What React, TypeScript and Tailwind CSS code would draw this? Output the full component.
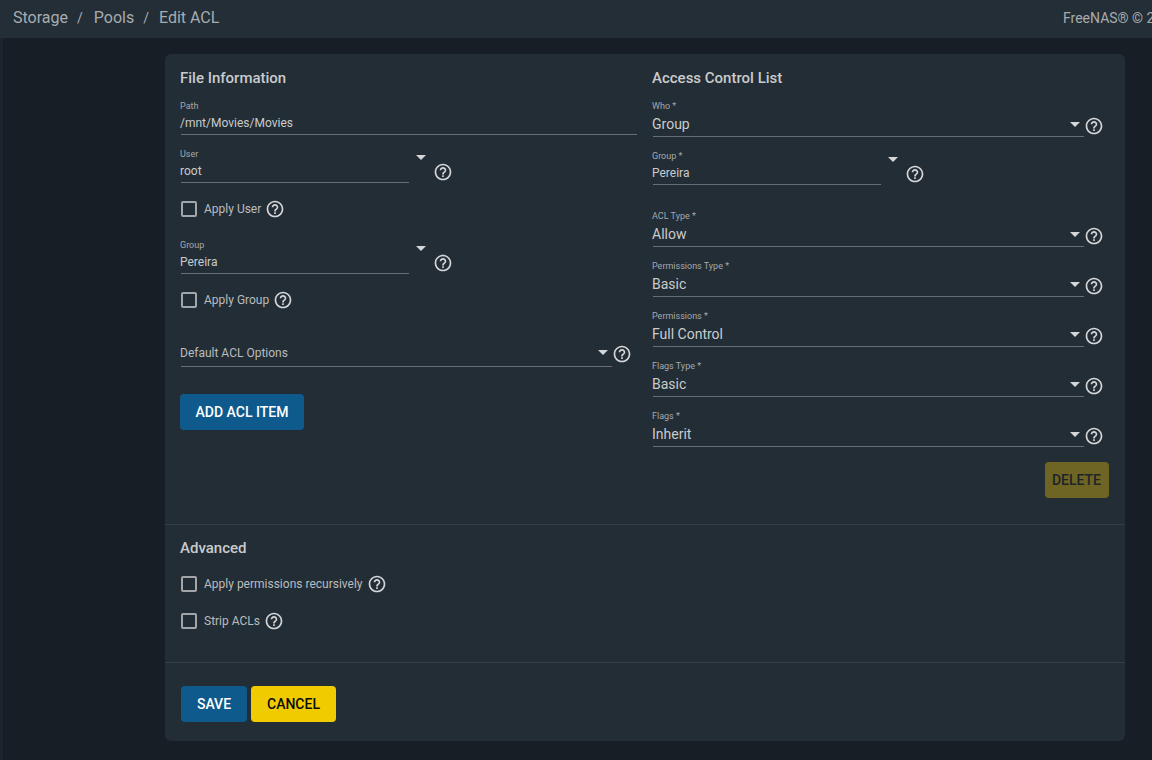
const HELP_PATH =
  "M11 18h2v-2h-2v2zm1-16C6.48 2 2 6.48 2 12s4.48 10 10 10 10-4.48 10-10S17.52 2 12 2zm0 18c-4.41 0-8-3.59-8-8s3.59-8 8-8 8 3.59 8 8-3.59 8-8 8zm0-14c-2.21 0-4 1.79-4 4h2c0-1.1.9-2 2-2s2 .9 2 2c0 2-3 1.75-3 5h2c0-2.25 3-2.5 3-5 0-2.21-1.79-4-4-4z";

function Help() {
  return (
    <svg viewBox="0 0 24 24" className="h-5 w-5 shrink-0 fill-[#d4d6d8]">
      <path d={HELP_PATH} />
    </svg>
  );
}

function Arrow() {
  return <span className="block h-0 w-0 shrink-0 border-x-[5px] border-t-[5px] border-x-transparent border-t-[#d4d6d8]" />;
}

// full width select, arrow sits on the underline row
function WideSelect({ label, value, className = "" }: { label: string; value: string; className?: string }) {
  return (
    <div className={`ml-px flex items-end ${className}`}>
      <div className="w-[431px]">
        <div className="-ml-px h-[10px] text-[9px] leading-[11px] text-[#a4a9ad]">{label}</div>
        <div className="flex h-[26px] items-center justify-between border-b border-[#686e73] pt-[2px] pr-[4px] text-[14px] text-[#c9cbcd]">
          <span className="-ml-px">{value}</span>
          <Arrow />
        </div>
      </div>
      <div className="mb-[1px] -ml-[0.5px]">
        <Help />
      </div>
    </div>
  );
}

// narrow combobox, arrow floats above the underline
function Combo({ label, value, className = "" }: { label: string; value: string; className?: string }) {
  return (
    <div className={`ml-px flex items-start ${className}`}>
      <div className="w-[228px]">
        <div className="-ml-px h-[10px] text-[9px] leading-[10px] text-[#a4a9ad]">{label}</div>
        <div className="flex h-[24px] items-center border-b border-[#686e73] text-[12px] text-[#c9cbcd]">
          <span className="-ml-px">{value}</span>
        </div>
      </div>
      <div className="ml-[7px] mt-[6px]">
        <Arrow />
      </div>
      <div className="ml-[6.5px] mt-[13px]">
        <Help />
      </div>
    </div>
  );
}

function Check({ label, className = "" }: { label: string; className?: string }) {
  return (
    <div className={`flex h-[16px] items-center ${className}`}>
      <span className="block h-4 w-4 rounded-[2px] border-2 border-[#a3a6a8]" />
      <span className="ml-[7px] text-[12px] text-[#b9bcbf]">{label}</span>
      <span className="ml-[4px]">
        <Help />
      </span>
    </div>
  );
}

function Btn({ children, className = "" }: { children: string; className?: string }) {
  return (
    <button className={`flex h-9 items-center justify-center rounded-[4px] text-[14px] font-medium ${className}`}>
      {children}
    </button>
  );
}

const aclRows = [
  ["ACL Type *", "Allow"],
  ["Permissions Type *", "Basic"],
  ["Permissions *", "Full Control"],
  ["Flags Type *", "Basic"],
  ["Flags *", "Inherit"],
];

export default function App() {
  return (
    <div className="h-[760px] w-[1152px] overflow-hidden bg-[#171e26] font-['Roboto',sans-serif]">
      <div className="flex h-[38px] items-center overflow-hidden bg-[#232e36] pb-[2px] whitespace-nowrap">
        <div className="flex w-[1063px] shrink-0 items-center pl-[13px] text-[16px] text-[#a8acb0]">
          <span>Storage</span>
          <span className="ml-[9px] text-[14px]">/</span>
          <span className="ml-[11px]">Pools</span>
          <span className="ml-[9px] text-[14px]">/</span>
          <span className="ml-[10px]">Edit ACL</span>
        </div>
        <span className="text-[14px] text-[#a8acb0]">FreeNAS® © 2020 - iXsystems, Inc</span>
      </div>

      <div className="flex items-start">
        <div className="h-[722px] w-[3px] shrink-0 bg-[#1c252d]" />
        <div className="ml-[162px] mt-[16px] w-[960px] rounded-[6px] bg-[#232d35]">
          <div className="flex h-[471px] border-b border-[#363f46] px-[15px] pt-[14px]">
            <div className="w-[472px] shrink-0">
              <h2 className="text-[15px] leading-5 font-medium text-[#c9cbcd]">File Information</h2>
              <div className="mt-[13px] ml-px w-[456px]">
                <div className="-ml-px h-[10px] text-[9px] leading-[10px] text-[#a4a9ad]">Path</div>
                <div className="flex h-[24px] items-center border-b border-[#686e73] text-[12px] text-[#c9cbcd]">
                  <span className="-ml-px">/mnt/Movies/Movies</span>
                </div>
              </div>
              <Combo label="User" value="root" className="mt-[14px]" />
              <Check label="Apply User" className="mt-[18px] ml-px" />
              <Combo label="Group" value="Pereira" className="mt-[23px]" />
              <Check label="Apply Group" className="mt-[18px] ml-px" />
              <div className="mt-[33px] ml-px flex items-center">
                <div className="flex h-[26px] w-[431px] items-center justify-between border-b border-[#686e73] pr-[4px] pb-[2px] text-[12px] text-[#b9bcbf]">
                  <span className="-ml-px">Default ACL Options</span>
                  <Arrow />
                </div>
                <div className="-ml-[0.5px]">
                  <Help />
                </div>
              </div>
              <Btn className="mt-[27px] w-[124px] bg-[#0e5a8c] text-white">ADD ACL ITEM</Btn>
            </div>
            <div className="flex-1">
              <h2 className="text-[15px] leading-5 font-medium text-[#c9cbcd]">Access Control List</h2>
              <WideSelect label="Who *" value="Group" className="mt-[13px]" />
              <Combo label="Group *" value="Pereira" className="mt-[14px]" />
              {aclRows.map(([label, value], i) => (
                <WideSelect key={label} label={label} value={value} className={i === 0 ? "mt-[26px]" : "mt-[14px]"} />
              ))}
              <div className="mt-[15px] flex w-[457px] justify-end">
                <Btn className="w-16 bg-[#6e6524] pr-px text-[#1f2427]">DELETE</Btn>
              </div>
            </div>
          </div>

          <div className="h-[138px] border-b border-[#363f46] px-[16px] pt-[13px]">
            <h2 className="-ml-px text-[15px] leading-5 font-medium text-[#c9cbcd]">Advanced</h2>
            <Check label="Apply permissions recursively" className="mt-[18px]" />
            <Check label="Strip ACLs" className="mt-[21px]" />
          </div>

          <div className="flex h-[78px] gap-1 px-[16px] pt-[23px]">
            <Btn className="w-[66px] bg-[#0e5a8c] text-white">SAVE</Btn>
            <Btn className="w-[85px] bg-[#f0cb00] text-[#0c0c0c]">CANCEL</Btn>
          </div>
        </div>
      </div>
    </div>
  );
}
